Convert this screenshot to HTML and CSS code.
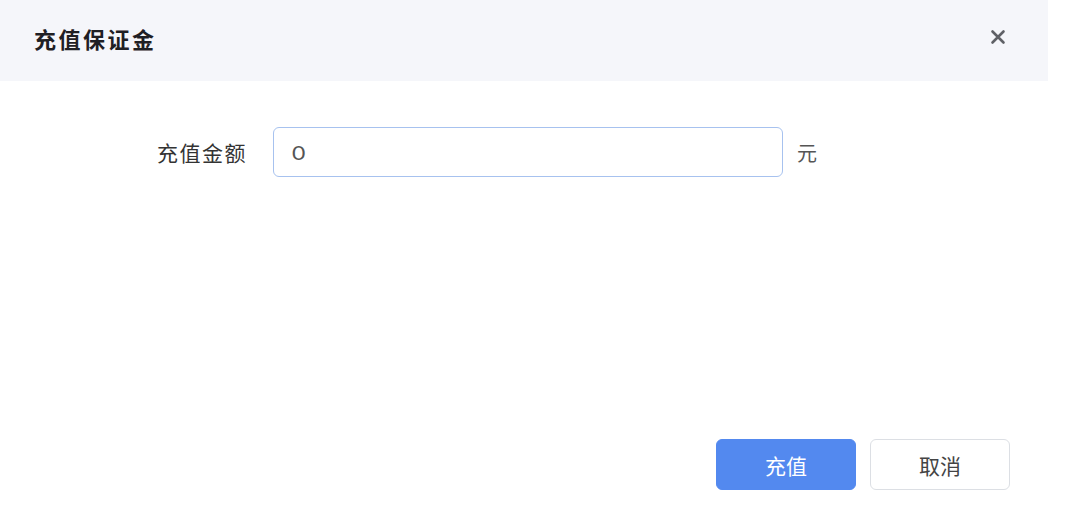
FILE: index.html
```html
<!DOCTYPE html>
<html lang="zh-CN">
<head>
<meta charset="utf-8">
<title>充值保证金</title>
<link rel="stylesheet" href="styles.css">
</head>
<body>
<div class="dialog">
  <div class="dialog-header">
    <h2 class="dialog-title">充值保证金</h2>
    <button class="dialog-close" aria-label="关闭">
      <svg width="16" height="16" viewBox="0 0 16 16"><path d="M2.5 2.5 L13.5 13.5 M13.5 2.5 L2.5 13.5" stroke="#5f6166" stroke-width="2.6" stroke-linecap="round" fill="none"/></svg>
    </button>
  </div>
  <div class="dialog-body">
    <div class="form-row">
      <label class="form-label">充值金额</label>
      <div class="form-input"><span class="form-value">0</span></div>
      <span class="form-unit">元</span>
    </div>
  </div>
  <div class="dialog-footer">
    <button class="btn btn-primary">充值</button>
    <button class="btn btn-default">取消</button>
  </div>
</div>
</body>
</html>
```
FILE: styles.css
```css
html, body {
  margin: 0;
  padding: 0;
  background: #ffffff;
}
body {
  font-family: "Noto Sans CJK SC", "Noto Sans", sans-serif;
  color: #333;
}
.dialog {
  width: 1048px;
  height: 528px;
  background: #fff;
}
.dialog-header {
  height: 81px;
  background: #f5f6fa;
  display: flex;
  align-items: center;
  justify-content: space-between;
  padding: 0 42px 0 34px;
  box-sizing: border-box;
}
.dialog-title {
  margin: 0;
  font-size: 22px;
  font-weight: 700;
  color: #1f2024;
  letter-spacing: 2.5px;
  line-height: 1;
  position: relative;
  top: -3px;
}
.dialog-close {
  border: 0;
  background: transparent;
  padding: 0;
  width: 16px;
  height: 16px;
  display: flex;
  position: relative;
  top: -4px;
}
.dialog-body {
  padding-top: 46px;
}
.form-row {
  display: flex;
  align-items: center;
  height: 50px;
}
.form-label {
  width: 247px;
  padding-right: 26px;
  box-sizing: content-box;
  text-align: right;
  font-size: 21px;
  color: #333;
  letter-spacing: 1.5px;
}
.form-input {
  width: 510px;
  height: 50px;
  box-sizing: border-box;
  border: 1px solid #a7c2ef;
  border-radius: 6px;
  padding-left: 18px;
  display: flex;
  align-items: center;
  font-family: "Lato", "Noto Sans", sans-serif;
  font-size: 20px;
  color: #555;
}
.form-value {
  display: inline-block;
  transform: scaleX(1.15);
  transform-origin: left center;
}
.form-unit {
  margin-left: 14px;
  font-size: 20px;
  color: #555;
}
.dialog-footer {
  margin-top: 262px;
  display: flex;
  justify-content: flex-end;
  gap: 14px;
  padding-right: 38px;
}
.btn {
  width: 140px;
  height: 51px;
  border-radius: 6px;
  font-family: "Noto Sans CJK SC", sans-serif;
  font-size: 21px;
  padding: 0;
  box-sizing: border-box;
}
.btn-primary {
  background: #5389ef;
  border: 1px solid #5389ef;
  color: #fff;
}
.btn-default {
  background: #fff;
  border: 1px solid #dcdfe4;
  color: #444;
}
```
